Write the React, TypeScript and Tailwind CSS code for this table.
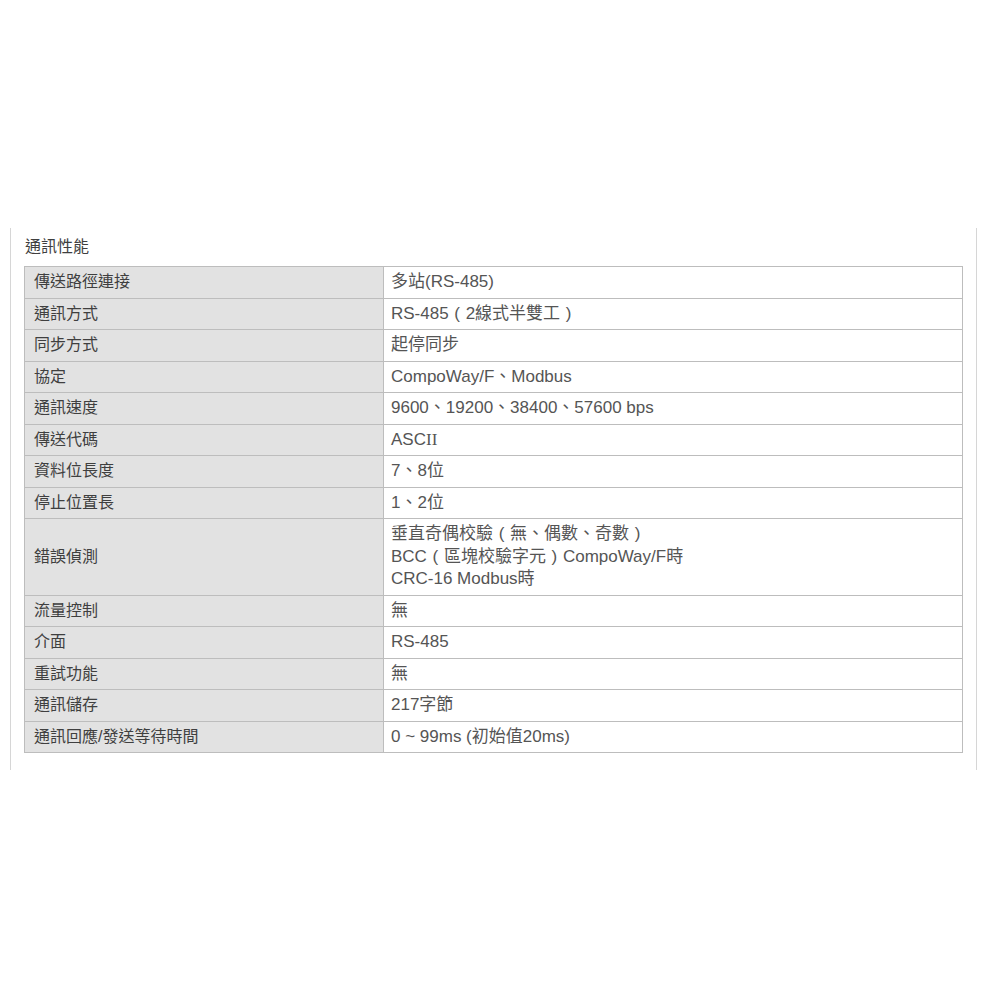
import React from 'react';

const rows: { label: string; value: string[] }[] = [
  { label: '傳送路徑連接', value: ['多站(RS-485)'] },
  { label: '通訊方式', value: ['RS-485（2線式半雙工）'] },
  { label: '同步方式', value: ['起停同步'] },
  { label: '協定', value: ['CompoWay/F、Modbus'] },
  { label: '通訊速度', value: ['9600、19200、38400、57600 bps'] },
  { label: '傳送代碼', value: ['ASCII'] },
  { label: '資料位長度', value: ['7、8位'] },
  { label: '停止位置長', value: ['1、2位'] },
  {
    label: '錯誤偵測',
    value: ['垂直奇偶校驗（無、偶數、奇數）', 'BCC（區塊校驗字元）CompoWay/F時', 'CRC-16 Modbus時'],
  },
  { label: '流量控制', value: ['無'] },
  { label: '介面', value: ['RS-485'] },
  { label: '重試功能', value: ['無'] },
  { label: '通訊儲存', value: ['217字節'] },
  { label: '通訊回應/發送等待時間', value: ['0 ~ 99ms (初始值20ms)'] },
];

// fullwidth parens sit centred in their box in the screenshot
function Value({ text }: { text: string }) {
  if (text === 'ASCII') {
    return (
      <>
        ASC<span style={{ fontFamily: '"Liberation Serif", serif' }}>II</span>
      </>
    );
  }
  const parts = text.split(/([（）])/);
  return (
    <>
      {parts.map((p, i) =>
        p === '（' || p === '）' ? (
          <span key={i} className="inline-block w-[1em] text-center">
            {p === '（' ? '(' : ')'}
          </span>
        ) : (
          <React.Fragment key={i}>{p}</React.Fragment>
        )
      )}
    </>
  );
}

export default function App() {
  return (
    <div
      className="min-h-[1000px] bg-white pt-[228px]"
      style={{ fontFamily: '"Liberation Sans", "Noto Sans CJK TC", sans-serif' }}
    >
      <div className="ml-[10px] w-[967px] h-[542px] border-l border-r border-[#d6d6d6] pl-[14px] pt-[8px]">
        <h2 className="text-[16px] leading-[22px] text-[#3f3f3f] mb-[8px]">通訊性能</h2>
        <table className="w-[939px] -ml-[1px] border-collapse leading-[22.5px]">
          <tbody>
            {rows.map((r) => (
              <tr key={r.label}>
                <td className="w-[359px] border border-[#bdbdbd] bg-[#e2e2e2] pl-[9px] pr-2 py-[4px] text-[16px] text-[#3f3f3f] align-middle">
                  {r.label}
                </td>
                <td className="border border-[#bdbdbd] bg-white pl-[7px] pr-2 py-[4px] text-[17px] text-[#555]">
                  {r.value.map((v) => (
                    <div key={v}>
                      <Value text={v} />
                    </div>
                  ))}
                </td>
              </tr>
            ))}
          </tbody>
        </table>
      </div>
    </div>
  );
}
